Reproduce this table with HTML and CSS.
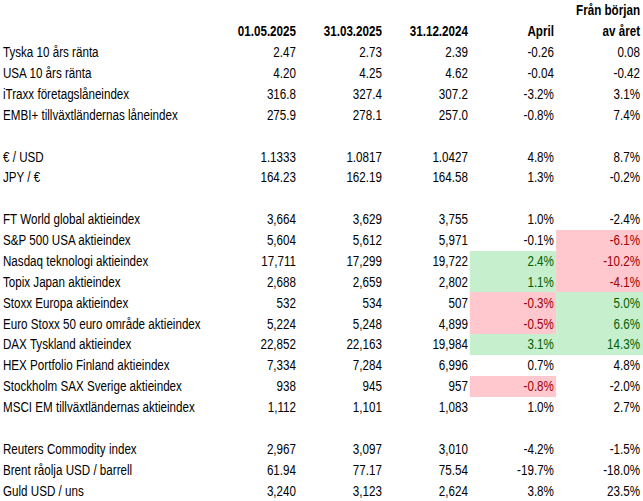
FILE: index.html
```html
<!DOCTYPE html>
<html lang="sv">
<head>
<meta charset="utf-8">
<title>Marknadsutveckling</title>
<link rel="stylesheet" href="styles.css">
</head>
<body>
<div class="sheet">
<table class="market">
  <colgroup>
    <col class="c-label"><col class="c-num"><col class="c-num"><col class="c-num"><col class="c-num"><col class="c-last">
  </colgroup>
  <thead>
    <tr><th></th><th></th><th></th><th></th><th></th><th>Från början</th></tr>
    <tr><th></th><th>01.05.2025</th><th>31.03.2025</th><th>31.12.2024</th><th>April</th><th>av året</th></tr>
  </thead>
  <tbody>
    <tr><td>Tyska 10 års ränta</td><td>2.47</td><td>2.73</td><td>2.39</td><td>-0.26</td><td>0.08</td></tr>
    <tr><td>USA 10 års ränta</td><td>4.20</td><td>4.25</td><td>4.62</td><td>-0.04</td><td>-0.42</td></tr>
    <tr><td>iTraxx företagslåneindex</td><td>316.8</td><td>327.4</td><td>307.2</td><td>-3.2%</td><td>3.1%</td></tr>
    <tr><td>EMBI+ tillväxtländernas låneindex</td><td>275.9</td><td>278.1</td><td>257.0</td><td>-0.8%</td><td>7.4%</td></tr>
    <tr class="gap"><td></td><td></td><td></td><td></td><td></td><td></td></tr>
    <tr><td>€ / USD</td><td>1.1333</td><td>1.0817</td><td>1.0427</td><td>4.8%</td><td>8.7%</td></tr>
    <tr><td>JPY / €</td><td>164.23</td><td>162.19</td><td>164.58</td><td>1.3%</td><td>-0.2%</td></tr>
    <tr class="gap"><td></td><td></td><td></td><td></td><td></td><td></td></tr>
    <tr><td>FT World global aktieindex</td><td>3,664</td><td>3,629</td><td>3,755</td><td>1.0%</td><td>-2.4%</td></tr>
    <tr><td>S&amp;P 500 USA aktieindex</td><td>5,604</td><td>5,612</td><td>5,971</td><td>-0.1%</td><td class="neg">-6.1%</td></tr>
    <tr><td>Nasdaq teknologi aktieindex</td><td>17,711</td><td>17,299</td><td>19,722</td><td class="pos">2.4%</td><td class="neg">-10.2%</td></tr>
    <tr><td>Topix Japan aktieindex</td><td>2,688</td><td>2,659</td><td>2,802</td><td class="pos">1.1%</td><td class="neg">-4.1%</td></tr>
    <tr><td>Stoxx Europa aktieindex</td><td>532</td><td>534</td><td>507</td><td class="neg">-0.3%</td><td class="pos">5.0%</td></tr>
    <tr><td>Euro Stoxx 50 euro område aktieindex</td><td>5,224</td><td>5,248</td><td>4,899</td><td class="neg">-0.5%</td><td class="pos">6.6%</td></tr>
    <tr><td>DAX Tyskland aktieindex</td><td>22,852</td><td>22,163</td><td>19,984</td><td class="pos">3.1%</td><td class="pos">14.3%</td></tr>
    <tr><td>HEX Portfolio Finland aktieindex</td><td>7,334</td><td>7,284</td><td>6,996</td><td>0.7%</td><td>4.8%</td></tr>
    <tr><td>Stockholm SAX Sverige aktieindex</td><td>938</td><td>945</td><td>957</td><td class="neg">-0.8%</td><td>-2.0%</td></tr>
    <tr><td>MSCI EM tillväxtländernas aktieindex</td><td>1,112</td><td>1,101</td><td>1,083</td><td>1.0%</td><td>2.7%</td></tr>
    <tr class="gap"><td></td><td></td><td></td><td></td><td></td><td></td></tr>
    <tr><td>Reuters Commodity index</td><td>2,967</td><td>3,097</td><td>3,010</td><td>-4.2%</td><td>-1.5%</td></tr>
    <tr><td>Brent råolja USD / barrell</td><td>61.94</td><td>77.17</td><td>75.54</td><td>-19.7%</td><td>-18.0%</td></tr>
    <tr><td>Guld USD / uns</td><td>3,240</td><td>3,123</td><td>2,624</td><td>3.8%</td><td>23.5%</td></tr>
  </tbody>
</table>
</div>
</body>
</html>
```

FILE: styles.css
```css
html, body {
  margin: 0;
  padding: 0;
  background: #ffffff;
  overflow: hidden;
}

.sheet {
  width: 643px;
  height: 501px;
  overflow: hidden;
}

/* Laid out at full Arial width, then condensed horizontally to
   imitate the narrow spreadsheet font (Arial Narrow ~ 0.83 wide). */
.market {
  width: 774.7px;
  border-collapse: collapse;
  border-spacing: 0;
  table-layout: fixed;
  font-family: "Liberation Sans", Arial, sans-serif;
  font-size: 14px;
  color: #000000;
  transform: scaleX(0.83);
  transform-origin: 0 0;
}

.c-label { width: 255.4px; }
.c-num { width: 103.6px; }
.c-last { width: 104.9px; }

.market th,
.market td {
  height: 20.875px;
  padding: 0 2.4px 0 0;
  line-height: 16px;
  white-space: nowrap;
  text-align: right;
  vertical-align: middle;
  box-sizing: border-box;
}

.market th {
  font-weight: bold;
}

.market td:first-child {
  text-align: left;
  padding: 0 0 0 3.6px;
}

.market td:last-child,
.market th:last-child {
  padding-right: 3.6px;
}

.market .pos {
  background: #c6efce;
  color: #006100;
}

.market .neg {
  background: #ffc7ce;
  color: #9c0006;
}
```
